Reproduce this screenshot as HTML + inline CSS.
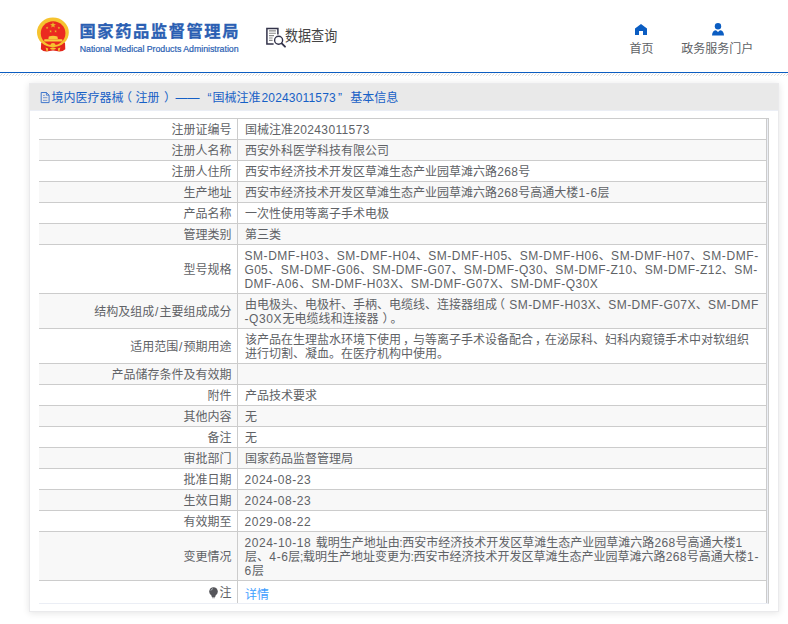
<!DOCTYPE html>
<html lang="zh-CN">
<head>
<meta charset="utf-8">
<title>国家药品监督管理局 数据查询</title>
<style>
*{box-sizing:border-box;margin:0;padding:0}
html,body{width:788px;height:624px;overflow:hidden;background:#fff}
body{position:relative;text-spacing-trim:space-all;font-family:"Liberation Sans","Noto Sans CJK SC",sans-serif;font-size:12px;color:#606266;line-height:14px}
.abs{position:absolute;white-space:nowrap}
#hdr{position:absolute;left:0;top:0;width:788px;height:72px;background:#fff}
#blue{position:absolute;left:0;top:72px;width:788px;height:1px;background:#0b5dc2}
.hatch{position:absolute;left:0;width:788px;height:1px;background-size:3px 1px;background-repeat:repeat-x}
#h1{top:73px;background-image:linear-gradient(90deg,transparent 0,transparent 2px,#f1ebe4 2px,#f1ebe4 3px)}
#h2{top:74px;background-image:linear-gradient(90deg,transparent 0,transparent 1px,#d6d6d6 1px,#d6d6d6 2px,transparent 2px)}
#h3{top:75px;background-image:linear-gradient(90deg,#dedede 0,#dedede 1px,transparent 1px)}
#title{left:79.5px;top:17.8px;font-size:16.3px;line-height:26px;font-weight:bold;color:#2b5fb3;letter-spacing:1.55px;-webkit-text-stroke:.3px #2b5fb3}
#sub{left:79.7px;top:42.9px;font-size:8.8px;line-height:12px;letter-spacing:-.025px;color:#2b5fb3;-webkit-text-stroke:.2px #2b5fb3}
#dq{left:285.3px;top:26px;font-size:15px;line-height:20px;color:#444;transform-origin:0 0;transform:scaleX(.87)}
.nav{font-size:12px;line-height:16px;color:#606266;text-align:center}
#card{position:absolute;left:29px;top:83px;width:750px;height:529px;background:#fff;border:1px solid #eaeaec;box-shadow:0 1px 7px 0 rgba(0,0,0,.11)}
#chead{position:absolute;left:0;top:0;width:748px;height:27px;background:#e9e9e9;border-bottom:1px solid #ebeef5}
#ctitle{left:0;top:6.4px;font-size:12px;line-height:16px;color:#1660c6;width:750px;height:16px}
#ctitle span{position:absolute;top:0;white-space:nowrap}
#tw{position:absolute;left:39px;top:118px;width:730px;height:486px;border-right:1px solid #ccc;border-bottom:1px solid #ebeef5;background:#ebeef5}
table{position:absolute;left:0;top:0;width:728px;border-collapse:separate;border-spacing:0;table-layout:fixed;background:#fff}
td{border-top:1px solid #ccc;border-right:1px solid #ccc;padding:4px 0 2px;vertical-align:middle;font-size:12px;line-height:14px;white-space:nowrap}
td.l{width:199px;text-align:right;padding-right:5.6px}
td.v{padding-left:7px}
tr.s td{background:#f8f8f8}
a{color:#409eff;text-decoration:none;position:relative;top:1.6px}
.po,.pc,.cm{display:inline-block;width:12px;position:relative}
.po{left:-4px}
.pc{left:4px}
.cm{left:2px}
.bulb{display:inline-block;vertical-align:-2px;margin-right:1.6px}
</style>
</head>
<body>
<div id="hdr">
  <svg class="abs" style="left:33px;top:14px" width="40" height="42" viewBox="33 14 40 42">
    <path d="M41.2 42.5 L65 42.5 L65.3 49.2 Q63 51.6 59.5 51.6 L53 50.6 L46.5 51.6 Q43 51.6 40.9 49.2 Z" fill="#e3261c"/>
    <ellipse cx="52.9" cy="32.4" rx="15.9" ry="14.8" fill="#f6c32f"/>
    <ellipse cx="53.1" cy="33.3" rx="12.3" ry="12" fill="#eb2a20"/>
    <polygon points="53.00,22.00 53.77,24.05 55.95,24.14 54.24,25.50 54.82,27.61 53.00,26.40 51.18,27.61 51.76,25.50 50.05,24.14 52.23,24.05" fill="#e8b52a"/>
    <polygon points="47.10,26.40 47.45,27.32 48.43,27.37 47.66,27.98 47.92,28.93 47.10,28.39 46.28,28.93 46.54,27.98 45.77,27.37 46.75,27.32" fill="#e8b52a"/>
    <polygon points="58.90,26.40 59.25,27.32 60.23,27.37 59.46,27.98 59.72,28.93 58.90,28.39 58.08,28.93 58.34,27.98 57.57,27.37 58.55,27.32" fill="#e8b52a"/>
    <polygon points="50.60,29.90 50.95,30.82 51.93,30.87 51.16,31.48 51.42,32.43 50.60,31.89 49.78,32.43 50.04,31.48 49.27,30.87 50.25,30.82" fill="#e8b52a"/>
    <polygon points="55.60,29.90 55.95,30.82 56.93,30.87 56.16,31.48 56.42,32.43 55.60,31.89 54.78,32.43 55.04,31.48 54.27,30.87 55.25,30.82" fill="#e8b52a"/>
    <path d="M48.4 38.9 L48.8 36.4 Q53 35.2 57.4 36.4 L57.9 38.9 Z" fill="#f7c93c"/>
    <rect x="44.2" y="39.2" width="18.2" height="2.4" rx=".6" fill="#f8cf3e"/>
    <ellipse cx="53" cy="44.7" rx="2.5" ry="1.7" fill="#f6c32f"/>
    <path d="M49.8 48.6 Q53 46.6 56.2 48.6 Q53 51 49.8 48.6 Z" fill="#f5c431"/>
    <path d="M45.6 47.6 L48.2 48.4 L47.6 51.3 L46.6 51.3 Z M60.4 47.6 L57.8 48.4 L58.4 51.3 L59.4 51.3 Z" fill="#f5c431"/>
  </svg>
  <div id="title" class="abs">国家药品监督管理局</div>
  <div id="sub" class="abs">National Medical Products Administration</div>
  <svg class="abs" style="left:264px;top:26px" width="24" height="24" viewBox="264 26 24 24" fill="none" stroke="#33334a">
    <path d="M273.6 44.1 H266.9 V28.5 H277.9 V34.6" stroke-width="1.5"/>
    <path d="M269 30.9h6.9M269 33.2h6.9M269 35.6h5M269 38h3.6M269 40.4h3.6" stroke="#8a8a8a" stroke-width="1.1"/>
    <circle cx="278.6" cy="40.2" r="4" stroke-width="1.4"/>
    <path d="M281.7 43.4 L285 46.7" stroke-width="1.9" stroke-linecap="round"/>
  </svg>
  <div id="dq" class="abs">数据查询</div>
  <svg class="abs" style="left:635px;top:24px" width="12" height="11" viewBox="0 0 12 11"><path d="M6 0 L12 4.6 V11 H8 V7 H4 V11 H0 V4.6 Z" fill="#0b5dc2"/></svg>
  <div class="abs nav" style="left:629px;top:41.4px;width:25px">首页</div>
  <svg class="abs" style="left:712px;top:23px" width="12" height="13" viewBox="0 0 12 13"><circle cx="6" cy="3.3" r="3.2" fill="#0b5dc2"/><path d="M0 12.5 C0 9 2 7.3 4 7.3 L6 9 L8 7.3 C10 7.3 12 9 12 12.5 Z" fill="#0b5dc2"/></svg>
  <div class="abs nav" style="left:681.3px;top:41.4px;width:72px">政务服务门户</div>
</div>
<div id="blue"></div>
<div class="hatch" id="h1"></div><div class="hatch" id="h2"></div><div class="hatch" id="h3"></div>
<div id="card">
  <div id="chead">
    <svg class="abs" style="left:9px;top:7px" width="12" height="13" viewBox="39 91 12 13" fill="none" stroke="#2f6bc8" stroke-width=".9"><path d="M41.2 92.5 H46.4 L49.1 95.2 V102.6 H41.2 Z"/><path d="M46.4 92.5 V95.2 H49.1" stroke-width=".8"/><path d="M43 95.4h1.8M43 97.7h4.3M43 100.4h4.3" stroke-width=".8" stroke="#5b85cf"/></svg>
    <div id="ctitle" class="abs"><span style="left:21.50px;">境内医疗器械</span><span style="left:90.00px;">（</span><span style="left:105.60px;">注册</span><span style="left:134.00px;">）</span><span style="left:145.60px;">——</span><span style="left:177.60px;">“</span><span style="left:182.60px;">国械注准</span><span style="left:231.50px;letter-spacing:0.162px">20243011573</span><span style="left:307.90px;">”</span><span style="left:320.20px;">基本信息</span></div>
  </div>
</div>
<div id="tw"><i style="position:absolute;right:0;top:0;width:1px;height:1px;background:#ccc;z-index:2"></i>
<table>
<tr style="height:21px"><td class="l">注册证编号</td><td class="v">国械注准<span style="letter-spacing:0.366px;margin:0 -0.183px 0 0.183px">20243011573</span></td></tr>
<tr class="s" style="height:21px"><td class="l">注册人名称</td><td class="v">西安外科医学科技有限公司</td></tr>
<tr style="height:21px"><td class="l">注册人住所</td><td class="v">西安市经济技术开发区草滩生态产业园草滩六路<span style="letter-spacing:0.366px;margin:0 -0.183px 0 0.183px">268</span>号</td></tr>
<tr class="s" style="height:21px"><td class="l">生产地址</td><td class="v">西安市经济技术开发区草滩生态产业园草滩六路<span style="letter-spacing:0.366px;margin:0 -0.183px 0 0.183px">268</span>号高通大楼<span style="letter-spacing:0.629px;margin:0 -0.314px 0 0.314px">1-6</span>层</td></tr>
<tr style="height:21px"><td class="l">产品名称</td><td class="v">一次性使用等离子手术电极</td></tr>
<tr class="s" style="height:21px"><td class="l">管理类别</td><td class="v">第三类</td></tr>
<tr style="height:49px"><td class="l">型号规格</td><td class="v"><span style="letter-spacing:0.543px;margin:0 0.500px 0 -0.500px">SM-DMF-H03</span>、<span style="letter-spacing:0.543px;margin:0 -0.272px 0 0.272px">SM-DMF-H04</span>、<span style="letter-spacing:0.543px;margin:0 -0.272px 0 0.272px">SM-DMF-H05</span>、<span style="letter-spacing:0.543px;margin:0 -0.272px 0 0.272px">SM-DMF-H06</span>、<span style="letter-spacing:0.543px;margin:0 -0.272px 0 0.272px">SM-DMF-H07</span>、<span style="letter-spacing:0.622px;margin:0 -0.311px 0 0.311px">SM-DMF-</span><br><span style="letter-spacing:0.294px;margin:0 0.500px 0 -0.500px">G05</span>、<span style="letter-spacing:0.477px;margin:0 -0.238px 0 0.238px">SM-DMF-G06</span>、<span style="letter-spacing:0.477px;margin:0 -0.238px 0 0.238px">SM-DMF-G07</span>、<span style="letter-spacing:0.477px;margin:0 -0.238px 0 0.238px">SM-DMF-Q30</span>、<span style="letter-spacing:0.477px;margin:0 -0.238px 0 0.238px">SM-DMF-Z10</span>、<span style="letter-spacing:0.477px;margin:0 -0.238px 0 0.238px">SM-DMF-Z12</span>、<span style="letter-spacing:0.588px;margin:0 -0.294px 0 0.294px">SM-</span><br><span style="letter-spacing:0.428px;margin:0 0.500px 0 -0.500px">DMF-A06</span>、<span style="letter-spacing:0.464px;margin:0 -0.232px 0 0.232px">SM-DMF-H03X</span>、<span style="letter-spacing:0.464px;margin:0 -0.232px 0 0.232px">SM-DMF-G07X</span>、<span style="letter-spacing:0.464px;margin:0 -0.232px 0 0.232px">SM-DMF-Q30X</span></td></tr>
<tr class="s" style="height:35px"><td class="l">结构及组成<span style="letter-spacing:1.866px;margin:0 -0.933px 0 0.933px">/</span>主要组成成分</td><td class="v">由电极头、电极杆、手柄、电缆线、连接器组成<span class="po">（</span><span style="letter-spacing:0.454px;margin:0 -0.227px 0 0.227px">SM-DMF-H03X</span>、<span style="letter-spacing:0.454px;margin:0 -0.227px 0 0.227px">SM-DMF-G07X</span>、<span style="letter-spacing:0.460px;margin:0 -0.230px 0 0.230px">SM-DMF</span><br><span style="letter-spacing:0.561px;margin:0 0.500px 0 -0.500px">-Q30X</span>无电缆线和连接器<span class="pc">）</span>。</td></tr>
<tr style="height:35px"><td class="l">适用范围<span style="letter-spacing:1.866px;margin:0 -0.933px 0 0.933px">/</span>预期用途</td><td class="v">该产品在生理盐水环境下使用<span class="cm">，</span>与等离子手术设备配合<span class="cm">，</span>在泌尿科、妇科内窥镜手术中对软组织<br>进行切割、凝血。在医疗机构中使用。</td></tr>
<tr class="s" style="height:21px"><td class="l">产品储存条件及有效期</td><td class="v"></td></tr>
<tr style="height:21px"><td class="l">附件</td><td class="v">产品技术要求</td></tr>
<tr class="s" style="height:21px"><td class="l">其他内容</td><td class="v">无</td></tr>
<tr style="height:21px"><td class="l">备注</td><td class="v">无</td></tr>
<tr class="s" style="height:21px"><td class="l">审批部门</td><td class="v">国家药品监督管理局</td></tr>
<tr style="height:21px"><td class="l">批准日期</td><td class="v"><span style="letter-spacing:0.524px;margin:0 0.500px 0 -0.500px">2024-08-23</span></td></tr>
<tr class="s" style="height:21px"><td class="l">生效日期</td><td class="v"><span style="letter-spacing:0.524px;margin:0 0.500px 0 -0.500px">2024-08-23</span></td></tr>
<tr style="height:21px"><td class="l">有效期至</td><td class="v"><span style="letter-spacing:0.524px;margin:0 0.500px 0 -0.500px">2029-08-22</span></td></tr>
<tr class="s" style="height:49px"><td class="l">变更情况</td><td class="v"><span style="letter-spacing:0.537px;margin:0 0.500px 0 -0.500px">2024-10-18 </span>载明生产地址由<span style="letter-spacing:-0.734px;margin:0 0.367px 0 -0.367px">:</span>西安市经济技术开发区草滩生态产业园草滩六路<span style="letter-spacing:0.366px;margin:0 -0.183px 0 0.183px">268</span>号高通大楼<span style="letter-spacing:0.366px;margin:0 -0.183px 0 0.183px">1</span><br>层、<span style="letter-spacing:0.629px;margin:0 -0.314px 0 0.314px">4-6</span>层<span style="letter-spacing:-0.734px;margin:0 0.367px 0 -0.367px">;</span>载明生产地址变更为<span style="letter-spacing:-0.734px;margin:0 0.367px 0 -0.367px">:</span>西安市经济技术开发区草滩生态产业园草滩六路<span style="letter-spacing:0.366px;margin:0 -0.183px 0 0.183px">268</span>号高通大楼<span style="letter-spacing:0.760px;margin:0 -0.380px 0 0.380px">1-</span><br><span style="letter-spacing:0.366px;margin:0 0.500px 0 -0.500px">6</span>层</td></tr>
<tr style="height:23px"><td class="l"><svg class="bulb" width="9" height="12" viewBox="0 0 9 12"><circle cx="4.5" cy="4.5" r="4.3" fill="#55555a"/><path d="M2.2 7.6 L6.8 7.6 L6.2 10 H2.8 Z" fill="#55555a"/><path d="M3 10.3h3v.9h-3z" fill="#8a8a8e"/><path d="M1.9 3.6 A3 3 0 0 1 4 1.6" stroke="#c5ced6" stroke-width=".8" fill="none"/></svg>注</td><td class="v"><a>详情</a></td></tr>
</table>
</div>
</body>
</html>
